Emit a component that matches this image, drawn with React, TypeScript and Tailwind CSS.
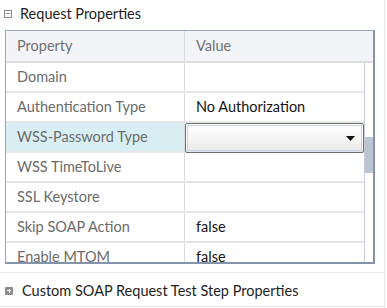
import React from 'react'

const rows: { label: string; value?: string; select?: boolean }[] = [
  { label: 'Domain' },
  { label: 'Authentication Type', value: 'No Authorization' },
  { label: 'WSS-Password Type', select: true },
  { label: 'WSS TimeToLive' },
  { label: 'SSL Keystore' },
  { label: 'Skip SOAP Action', value: 'false' },
  { label: 'Enable MTOM', value: 'false' },
]

export default function App() {
  return (
    <div
      className="w-[387px] h-[308px] bg-white overflow-hidden text-[14.5px]"
      style={{ fontFamily: 'Lato, "Open Sans", sans-serif' }}
    >
      <div className="w-[385px] h-full border-r border-[#e6e6e6] flex flex-col">
        {/* Section title */}
        <div className="h-[30px] flex items-center pl-[4px] pb-[3px]">
          <span className="w-[8px] h-[8px] border border-[#8c8c8c] flex items-center justify-center">
            <span className="w-[4px] h-px bg-[#8c8c8c]" />
          </span>
          <span className="ml-[8px] text-[#1e1e1e]">Request Properties</span>
        </div>

        {/* Property grid */}
        <div className="ml-[5px] w-[370px] h-[234px] border border-[#9aa6bb] border-r-2 border-b-2 border-r-[#8593ab] border-b-[#8593ab] flex flex-col overflow-hidden">
          <div className="h-[32px] shrink-0 flex bg-[#f3f4f7] border-b-2 border-[#dedede] text-[#707070]">
            <div className="w-[179px] border-r border-[#dcdcdc] pl-[11px] flex items-center">Property</div>
            <div className="flex-1 pl-[11px] flex items-center">Value</div>
          </div>
          <div className="flex flex-1 min-h-0">
            <div className="flex-1 flex flex-col">
              {rows.map((r) => (
                <div key={r.label} className="h-[30px] shrink-0 flex border-b-2 border-[#e6e6e6]">
                  <div
                    className={
                      'w-[179px] border-r border-[#dcdcdc] pl-[11px] pb-px flex items-center text-[#6b6b6b] ' +
                      (r.select ? 'bg-[#d9eef2]' : '')
                    }
                  >
                    {r.label}
                  </div>
                  <div className="flex-1 flex items-center">
                    {r.select ? (
                      <div className="w-full h-[30px] -mb-[2px] rounded-[2px] border border-[#6f6f6f] p-px">
                        <div className="w-full h-full border border-[#c3d3ec] bg-gradient-to-b from-white to-[#ebebeb] flex items-center justify-end pr-[6px]">
                          <svg width="9" height="5" viewBox="0 0 9 5">
                            <path d="M0 0 H9 L4.5 5 Z" fill="#111" />
                          </svg>
                        </div>
                      </div>
                    ) : (
                      <span className="pl-[11px] pb-px text-[#141414]">{r.value}</span>
                    )}
                  </div>
                </div>
              ))}
            </div>
            <div className="w-[9px] border-l border-[#c5ccd8] flex flex-col">
              <div className="h-[74px]" />
              <div className="h-[36px] bg-[#bac4d4]" />
            </div>
          </div>
        </div>

        <div className="mt-[8px] border-t border-[#e6e6e6]" />

        {/* Collapsed section */}
        <div className="h-[34px] flex items-center pl-[5px] pt-[2px] border-b border-[#e6e6e6]">
          <span className="w-[8px] h-[8px] rounded-[1px] bg-[#8c8c8c] flex items-center justify-center relative">
            <span className="absolute w-[4px] h-px bg-white" />
            <span className="absolute w-px h-[4px] bg-white" />
          </span>
          <span className="ml-[9px] text-[#1e1e1e]">Custom SOAP Request Test Step Properties</span>
        </div>
      </div>
    </div>
  )
}
